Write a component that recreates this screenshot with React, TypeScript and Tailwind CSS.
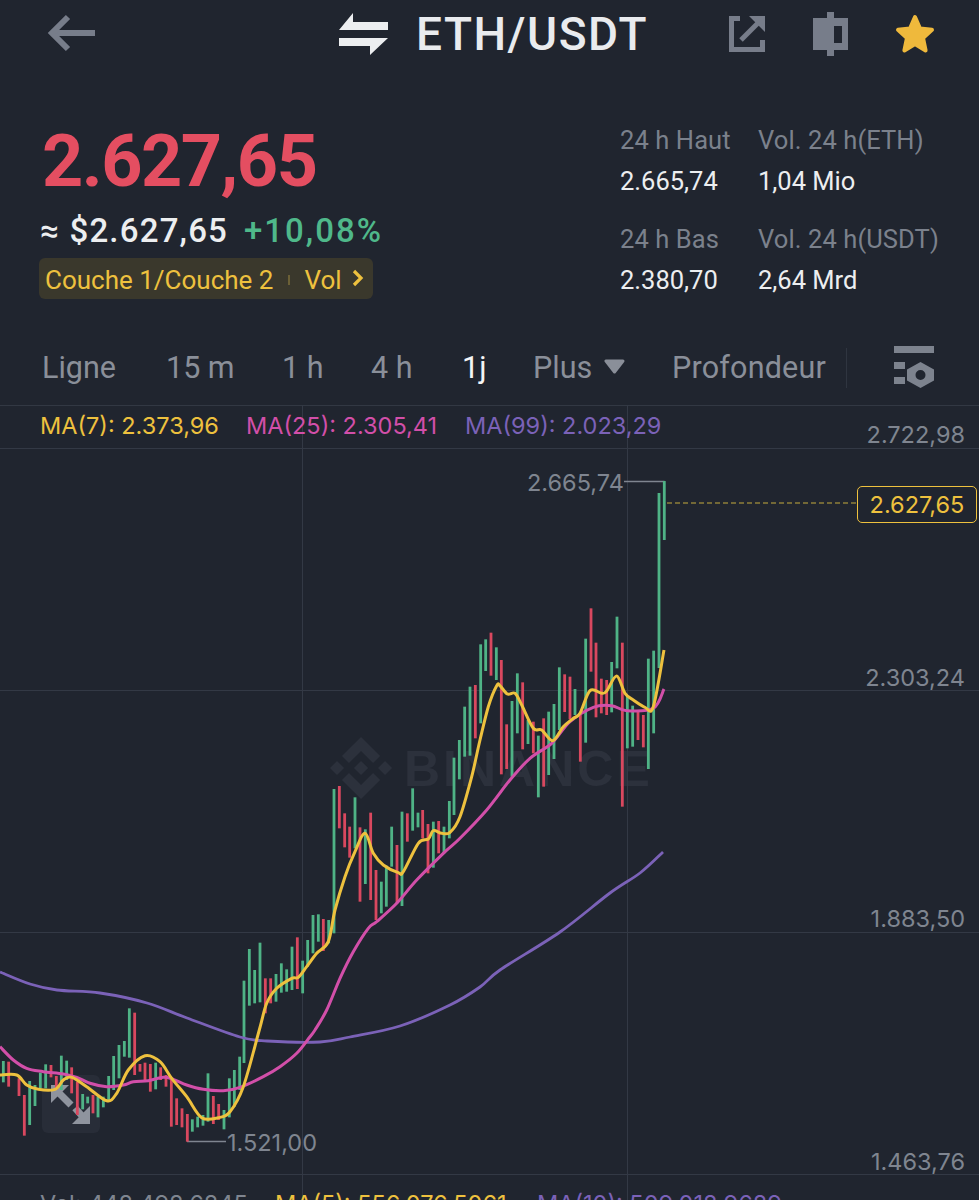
import React from "react";

type B = [number, number, number, "g" | "r"];
const G = "#4fb386";
const R = "#d9485f";

const z5: B[] = [[10,213,277,"g"],[26,215,290,"r"],[57,265,318,"r"],[73,315,437,"r"],[89,273,405,"g"],[105,285,348,"g"],[121,248,295,"g"],[137,223,295,"g"],[153,225,262,"r"],[169,258,300,"r"],[184,197,300,"g"],[200,212,270,"g"],[215,232,310,"r"],[232,275,375,"r"],[248,312,358,"g"],[263,320,340,"g"],[279,315,370,"r"],[294,320,382,"g"],[310,320,352,"g"],[326,258,330,"g"],[341,198,300,"g"],[357,165,265,"g"],[373,153,200,"g"],[388,55,203,"g"],[404,68,255,"r"],[420,222,245,"r"],[435,218,270,"r"],[451,222,305,"r"],[467,218,298,"g"],[482,232,270,"r"],[498,255,290,"r"],[514,265,410,"r"],[530,325,405,"r"],[546,355,412,"r"],[562,372,455,"r"],[577,388,425,"g"],[593,380,412,"g"],[609,375,407,"g"],[624,250,395,"g"],[640,318,402,"r"],[656,342,390,"r"],[672,360,418,"g"],[688,265,382,"g"],[703,240,350,"g"],[719,200,300,"g"]];
const z4: B[] = [[72,632,879,"g"],[88,537,707,"g"],[104,600,700,"g"],[120,518,697,"g"],[136,625,730,"r"],[152,625,700,"r"],[168,612,695,"g"],[184,580,668,"g"],[200,598,665,"g"],[216,530,660,"g"],[232,502,657,"r"],[248,572,670,"g"],[263,510,590,"g"],[279,435,550,"g"],[295,433,515,"g"],[310,447,543,"r"],[326,450,520,"g"],[342,57,490,"g"],[358,48,175,"r"],[374,130,232,"r"],[389,170,263,"r"],[405,82,235,"g"],[420,172,395,"r"],[436,178,342,"g"],[452,128,390,"r"],[468,300,450,"r"],[484,335,430,"g"],[499,287,410,"g"],[515,170,290,"g"],[531,225,400,"r"],[546,125,408,"g"],[562,130,215,"r"],[578,55,182,"g"],[594,128,172,"g"],[608,120,205,"r"],[624,162,310,"r"],[640,155,293,"g"],[656,153,250,"r"],[672,170,250,"g"],[688,93,205,"g"]];
const z3: B[] = [[72,503,675,"g"],[88,450,568,"g"],[104,350,500,"g"],[120,290,497,"g"],[136,285,445,"r"],[152,163,400,"g"],[167,148,243,"g"],[183,128,257,"r"],[199,172,270,"g"],[214,210,553,"r"],[230,403,537,"r"],[246,333,560,"g"],[262,250,430,"g"],[278,277,478,"r"],[294,390,462,"g"],[310,395,490,"r"],[325,437,622,"g"],[341,385,590,"r"],[356,365,555,"g"],[372,342,507,"g"],[388,232,420,"g"],[404,253,366,"r"],[420,260,388,"r"],[435,297,375,"g"],[451,370,515,"r"],[467,146,458,"g"],[483,55,245,"r"],[498,158,382,"r"],[514,266,370,"r"],[530,270,375,"r"],[545,216,367,"g"],[561,80,235,"g"],[577,158,650,"r"],[592,320,475,"g"],[608,347,470,"g"],[624,360,450,"r"],[640,375,472,"r"],[655,206,537,"g"],[671,182,430,"g"]];

type Bar = { x: number; t: number; b: number; c: string };
const seg = (ox: number, oy: number, bars: B[]): Bar[] =>
  bars.map(([x, t, b, c]) => ({ x: ox + x / 3, t: oy + t / 3, b: oy + b / 3, c: c === "g" ? G : R }));

const bars: Bar[] = [
  ...seg(0, 990, z5),
  ...seg(220, 770, z4),
  ...seg(430, 590, z3),
  { x: 659, t: 493, b: 668, c: G },
  { x: 664.3, t: 481, b: 540, c: G },
];

type P = [number, number];
const pts = (ox: number, oy: number, a: P[]): P[] => a.map(([x, y]) => [ox + x / 3, oy + y / 3]);

const smooth = (p: P[]): string => {
  let d = `M${p[0][0]} ${p[0][1]}`;
  for (let i = 0; i < p.length - 1; i++) {
    const a = p[Math.max(0, i - 1)];
    const b = p[i];
    const c = p[i + 1];
    const e = p[Math.min(p.length - 1, i + 2)];
    const c1x = b[0] + (c[0] - a[0]) / 6;
    const c1y = b[1] + (c[1] - a[1]) / 6;
    const c2x = c[0] - (e[0] - b[0]) / 6;
    const c2y = c[1] - (e[1] - b[1]) / 6;
    d += ` C${c1x.toFixed(1)} ${c1y.toFixed(1)} ${c2x.toFixed(1)} ${c2y.toFixed(1)} ${c[0].toFixed(1)} ${c[1].toFixed(1)}`;
  }
  return d;
};

const yellow: P[] = [
  ...pts(0, 990, [[0,255],[50,255],[80,285],[115,298],[165,298],[190,270],[215,262],[260,290],[320,332],[350,310],[385,240],[435,197],[480,215],[515,265],[560,320],[605,383],[655,383],[690,365],[730,290]]),
  ...pts(220, 770, [[118,780],[140,700],[170,655],[215,625],[235,622],[260,590],[290,550],[325,515],[345,420],[375,320],[405,245],[435,190],[460,250],[490,285],[535,308],[550,305],[595,220],[625,207],[640,182],[665,190],[690,187]]),
  ...pts(430, 590, [[90,680],[125,560],[150,450],[175,350],[200,287],[210,287],[232,312],[255,310],[275,345],[310,415],[335,420],[368,452],[400,410],[430,385],[450,370],[480,302],[515,310],[530,303],[560,258],[585,310],[610,330],[645,352],[670,350],[702,180]]),
];
const magenta: P[] = [
  ...pts(0, 990, [[0,170],[40,210],[80,235],[130,245],[190,252],[230,262],[270,280],[320,290],[370,285],[400,275],[445,272],[490,262],[520,268],[560,285],[610,298],[670,302],[720,292],[790,260],[840,230],[890,190],[930,140]]),
  ...pts(220, 770, [[285,780],[320,720],[360,625],[400,545],[445,475],[470,455],[530,400],[590,330],[670,250],[720,205]]),
  ...pts(430, 590, [[170,660],[240,570],[300,505],[365,460],[420,395],[490,352],[545,347],[590,362],[670,355],[702,297]]),
];
const purple: P[] = [[0,972],[30,984],[57,990],[100,993],[147,1003],[187,1018],[240,1037],[267,1041],[320,1042],[350,1037],[400,1026],[450,1005],[480,987],[500,970],[560,932],[610,893],[640,873],[663,852]];

const plex = { fontFamily: '"Roboto", "Noto Sans", sans-serif' };
const inter = { fontFamily: '"Inter", "Liberation Sans", sans-serif' };

const Stat = ({ label, value, w }: { label: string; value: string; w: string }) => (
  <div className={`${w} flex flex-col`}>
    <span className="text-[25.5px] leading-[30px] text-[#7b818c] tracking-[0.1px]">{label}</span>
    <span className="mt-[11px] text-[25.5px] leading-[30px] text-[#eceef0]">{value}</span>
  </div>
);

const AxisLabel = ({ y, children }: { y: string; children: string }) => (
  <span className={`absolute right-[14px] ${y} text-[23.5px] leading-[28px] text-[#7f8590]`} style={inter}>
    {children}
  </span>
);

export default function App() {
  return (
    <div className="w-[979px] h-[1200px] overflow-hidden bg-[#20252f] flex flex-col" style={plex}>
      {/* Top bar */}
      <div className="h-[68px] pt-[12px] pl-[47px] flex items-start">
        <svg width="48" height="44" viewBox="0 0 48 44" className="mt-[-1px] shrink-0" fill="none" stroke="#777d8a" strokeWidth="6">
          <path d="M48 22H6" />
          <path d="M21 6L5 22L21 38" />
        </svg>
        <svg width="49" height="44" viewBox="0 0 49 44" className="ml-[244px] shrink-0" fill="#eceef0">
          <path d="M14 1V10H49V18H0Z" />
          <path d="M0 26H49L31 43V34H0Z" />
        </svg>
        <span className="ml-[28px] w-[231px] text-[46px] leading-[44px] font-medium text-[#e9ebee] tracking-[1.5px] whitespace-nowrap">ETH/USDT</span>
        <svg width="36" height="36" viewBox="0 0 36 36" className="ml-[82px] mt-[4px] shrink-0" fill="none" stroke="#777d8a" strokeWidth="5">
          <path d="M11 2.5H2.5V33.5H33.5V24" />
          <path d="M12 24L29 7" />
          <path d="M20 0H36V16Z" fill="#777d8a" stroke="none" />
        </svg>
        <svg width="35" height="44" viewBox="0 0 35 44" className="ml-[48px] shrink-0">
          <path d="M14 0H21V6H35V38H21V44H14V38H0V6H14Z" fill="#777d8a" />
          <rect x="21" y="14" width="8" height="17" fill="#20252f" />
        </svg>
        <svg width="40" height="40" viewBox="0 0 40 40" className="ml-[47px] mt-[2px] shrink-0">
          <path d="M20 3L25 14.5L37 15.8L28 24L30.6 36.5L20 30L9.4 36.5L12 24L3 15.8L15 14.5Z" fill="#efb93c" stroke="#efb93c" strokeWidth="4" strokeLinejoin="round" />
        </svg>
      </div>

      {/* Price block */}
      <div className="h-[262px] pl-[39px] flex">
        <div className="w-[581px] flex flex-col items-start">
          <span className="mt-[54px] ml-[3px] text-[72px] leading-[80px] font-bold text-[#e44e61] tracking-[-1.5px] whitespace-nowrap">2.627,65</span>
          <div className="mt-[8px] ml-[1px] flex items-center text-[33px] leading-[42px] font-medium whitespace-nowrap">
            <span className="text-[#eceef0] w-[204px] tracking-[1.2px]">≈ $2.627,65</span>
            <span className="text-[#4fb88a] tracking-[2px]">+10,08%</span>
          </div>
          <div className="mt-[6px] h-[41px] w-[334px] rounded-[6px] bg-[#3a382c] pl-[6px] pt-[3px] flex items-center text-[26px] text-[#eec13e] whitespace-nowrap">
            <span>Couche 1/Couche 2</span>
            <span className="ml-[15px] w-[2px] h-[10px] bg-[#6b6036]" />
            <span className="ml-[14px]">Vol</span>
            <svg width="12" height="18" viewBox="0 0 12 18" className="ml-[10px] mt-[-5px]" fill="none" stroke="#eec13e" strokeWidth="3.2">
              <path d="M2 2L9 9L2 16" />
            </svg>
          </div>
        </div>
        <div className="flex flex-col gap-[28px] pt-[57px]">
          <div className="flex">
            <Stat w="w-[138px]" label="24 h Haut" value="2.665,74" />
            <Stat w="w-[210px]" label="Vol. 24 h(ETH)" value="1,04 Mio" />
          </div>
          <div className="flex">
            <Stat w="w-[138px]" label="24 h Bas" value="2.380,70" />
            <Stat w="w-[210px]" label="Vol. 24 h(USDT)" value="2,64 Mrd" />
          </div>
        </div>
      </div>

      {/* Interval tabs */}
      <div className="h-[75px] pl-[42px] pt-[1px] flex items-center text-[30.5px] text-[#8a8f99] whitespace-nowrap">
        <span className="w-[124px]">Ligne</span>
        <span className="w-[116px]">15 m</span>
        <span className="w-[89px]">1 h</span>
        <span className="w-[91px]">4 h</span>
        <span className="w-[71px] text-[#f4f5f6]">1j</span>
        <span className="w-[71px]">Plus</span>
        <svg width="21" height="15" viewBox="0 0 21 15" className="mt-[-4px] shrink-0">
          <path d="M2 2H19L10.5 13Z" fill="#8a8f99" stroke="#8a8f99" strokeWidth="3" strokeLinejoin="round" />
        </svg>
        <span className="ml-[47px] w-[174px] tracking-[0.2px]">Profondeur</span>
        <span className="w-px h-[40px] bg-[#2f3540]" />
        <svg width="40" height="42" viewBox="0 0 40 42" className="ml-[47px] mt-[-2px] shrink-0" fill="#7d838e">
          <rect x="0" y="0" width="40" height="7" />
          <rect x="0" y="16" width="11" height="7" />
          <rect x="0" y="31" width="11" height="7" />
          <path fillRule="evenodd" d="M26.5 16L40 23.5V34.5L26.5 42L13 34.5V23.5ZM26.5 24A5 5 0 1 0 26.5 34A5 5 0 1 0 26.5 24Z" />
        </svg>
      </div>

      {/* Chart canvas */}
      <div className="relative h-[795px] border-t border-[#323843]">
        <span className="absolute left-[404px] top-[334px] text-[50px] leading-[58px] font-bold text-[#2c313c] tracking-[3px]" style={{ fontFamily: '"Liberation Sans", sans-serif' }}>BINANCE</span>

        <div className="absolute left-[42px] top-[669px] w-[58px] h-[58px] rounded-[6px] bg-[#282d38] flex items-center justify-center">
          <svg width="58" height="58" viewBox="0 0 58 58" fill="#8f949e" stroke="none">
            <path d="M9 10H27L9 28Z" />
            <path d="M16 17L29 30" stroke="#8f949e" strokeWidth="7" />
            <path d="M48 49H30L48 31Z" />
            <path d="M41 42L33 33" stroke="#8f949e" strokeWidth="7" />
          </svg>
        </div>

        <svg className="absolute left-0 top-[-1px]" width="979" height="795" viewBox="0 405 979 795" fill="none">
          <g stroke="#333945" strokeWidth="1">
            <path d="M302.5 405V1200M627.5 405V1200" />
            <path d="M0 448.5H979M0 690.5H979M0 932.5H979M0 1174.5H979" />
          </g>
          <g transform="translate(330 737) scale(0.49)" fill="#2c313c">
            <path d="M38.73 53.2l24.59-24.58 24.6 24.6 14.3-14.31L63.32 0 24.42 38.9l14.31 14.3zM0 63.31l14.3-14.31 14.31 14.31-14.31 14.3L0 63.31zm38.73 10.11l24.59 24.59 24.6-24.6 14.31 14.29-38.9 38.91-38.91-38.88-.02-.02 14.33-14.29zm59.28-10.11l14.3-14.31 14.3 14.31-14.3 14.3-14.3-14.3z" />
            <path d="M77.83 63.3L63.32 48.78 52.59 59.51l-1.24 1.23-2.54 2.54 14.51 14.5 14.51-14.47z" />
          </g>
          <path d="M624 481.5H664.5M187 1141.5H226" stroke="#7f8590" strokeWidth="1.5" />
          <path d="M667 503H857" stroke="#8d7f3a" strokeWidth="1.5" strokeDasharray="5 3" />
          {bars.map((b, i) => (
            <rect key={i} x={b.x - 1.4} y={b.t} width="2.8" height={b.b - b.t} fill={b.c} />
          ))}
          <path d={smooth(purple)} stroke="#7b62b8" strokeWidth="2.8" />
          <path d={smooth(magenta)} stroke="#d24fa9" strokeWidth="3" />
          <path d={smooth(yellow)} stroke="#eec13e" strokeWidth="3" strokeLinejoin="round" />
        </svg>

        <div className="absolute left-[40px] top-[6px] flex text-[23.5px] leading-[28px] whitespace-nowrap" style={inter}>
          <span className="w-[206px] text-[#eec13e]">MA(7): 2.373,96</span>
          <span className="w-[219px] text-[#d24fa9]">MA(25): 2.305,41</span>
          <span className="text-[#7b62b8]">MA(99): 2.023,29</span>
        </div>

        <AxisLabel y="top-[15px]">2.722,98</AxisLabel>
        <AxisLabel y="top-[258px]">2.303,24</AxisLabel>
        <AxisLabel y="top-[499px]">1.883,50</AxisLabel>
        <AxisLabel y="top-[742px]">1.463,76</AxisLabel>

        <span className="absolute left-[527px] top-[63px] text-[23.5px] leading-[28px] text-[#7f8590]" style={inter}>2.665,74</span>
        <span className="absolute left-[227px] top-[723px] text-[23.5px] leading-[28px] text-[#7f8590]" style={inter}>1.521,00</span>

        <div className="absolute left-[857px] top-[80px] w-[120px] h-[37px] rounded-[5px] border-[1.5px] border-[#eec13e] bg-[#20252f] flex items-center justify-center text-[23.5px] text-[#eec13e]" style={inter}>2.627,65</div>

        <div className="absolute left-[40px] top-[784px] flex text-[23.5px] leading-[28px] whitespace-nowrap" style={inter}>
          <span className="w-[235px] text-[#7f8590]">Vol: 448.498,6845</span>
          <span className="w-[262px] text-[#eec13e]">MA(5): 556.076,5061</span>
          <span className="text-[#7b62b8]">MA(10): 509.018,9689</span>
        </div>
      </div>
    </div>
  );
}
